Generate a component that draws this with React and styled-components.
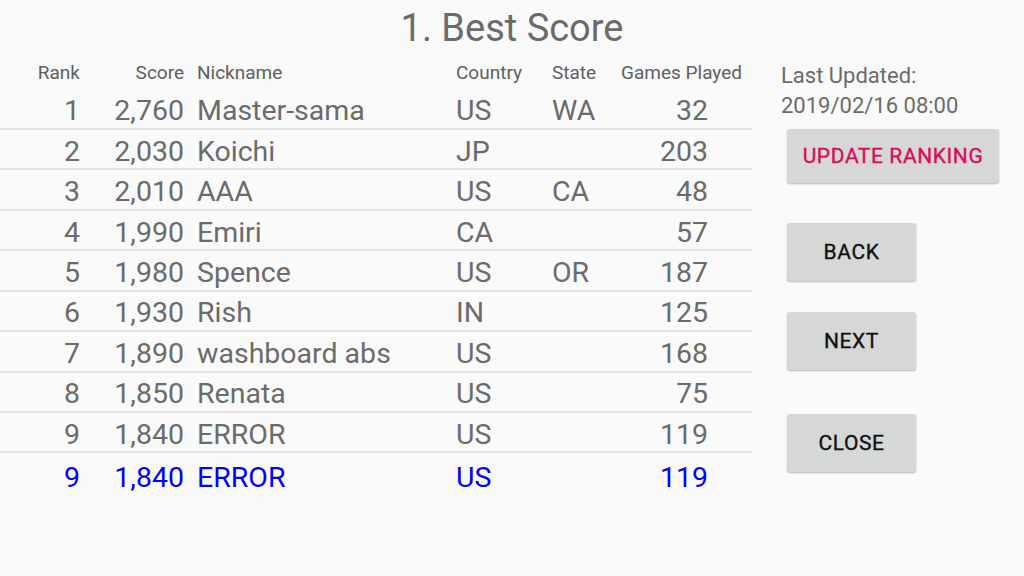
import React from 'react';
import styled, { createGlobalStyle } from 'styled-components';

const GlobalStyle = createGlobalStyle`
  html, body {
    margin: 0;
    padding: 0;
    background: #fafafa;
  }
  body {
    font-family: Roboto, "Liberation Sans", sans-serif;
  }
`;

const Screen = styled.div`
  width: 1024px;
  height: 576px;
  background: #fafafa;
  overflow: hidden;
`;

const Title = styled.h1`
  margin: 0;
  height: 56px;
  font-size: 38px;
  line-height: 56px;
  font-weight: 400;
  color: #6b6b6b;
  text-align: center;
`;

const Body = styled.div`
  display: flex;
`;

const Table = styled.div`
  width: 752px;
  display: flex;
  flex-direction: column;
`;

const Row = styled.div`
  display: grid;
  grid-template-columns: 80px 104px 272px 96px 69px 131px;
  align-items: center;
  box-sizing: border-box;
  height: ${(p) => (p.$header ? '33.5px' : '40.45px')};
  padding-top: ${(p) => (p.$header ? '0' : '4px')};
  margin-top: ${(p) => (p.$self ? '2px' : '0')};
  border-bottom: ${(p) => (p.$header || p.$self ? 'none' : '2px solid #e2e2e2')};
  font-size: ${(p) => (p.$header ? '19px' : '28.5px')};
  color: ${(p) => (p.$self ? '#0000ff' : p.$header ? '#5f5f5f' : '#6b6b6b')};
  white-space: nowrap;
`;

const Cell = styled.div`
  text-align: ${(p) => p.$align || 'left'};
  padding-left: ${(p) => p.$pl || 0}px;
  padding-right: ${(p) => p.$pr || 0}px;
`;

const Side = styled.div`
  margin-left: 29px;
  padding-top: 5px;
  display: flex;
  flex-direction: column;
  align-items: flex-start;
`;

const Updated = styled.div`
  font-size: 22px;
  line-height: 30px;
  color: #6b6b6b;
`;

const Button = styled.button`
  margin: ${(p) => p.$top}px 0 0 6px;
  width: ${(p) => (p.$wide ? 212 : 129)}px;
  height: ${(p) => (p.$wide ? 54 : 58)}px;
  padding: 0;
  border: none;
  border-radius: 3px;
  background: #d6d7d7;
  box-shadow: 0 1px 2px rgba(0, 0, 0, 0.28);
  font-family: Roboto, "Liberation Sans", sans-serif;
  font-size: 21px;
  font-weight: 400;
  letter-spacing: 0.6px;
  -webkit-text-stroke: 0.35px currentColor;
  color: ${(p) => (p.$accent ? '#dd0a55' : '#111')};
  text-transform: uppercase;
`;

const players = [
  [1, '2,760', 'Master-sama', 'US', 'WA', 32],
  [2, '2,030', 'Koichi', 'JP', '', 203],
  [3, '2,010', 'AAA', 'US', 'CA', 48],
  [4, '1,990', 'Emiri', 'CA', '', 57],
  [5, '1,980', 'Spence', 'US', 'OR', 187],
  [6, '1,930', 'Rish', 'IN', '', 125],
  [7, '1,890', 'washboard abs', 'US', '', 168],
  [8, '1,850', 'Renata', 'US', '', 75],
  [9, '1,840', 'ERROR', 'US', '', 119],
];

const RankRow = ({ data, self }) => (
  <Row $self={self}>
    <Cell $align="right">{data[0]}</Cell>
    <Cell $align="right">{data[1]}</Cell>
    <Cell $pl={13}>{data[2]}</Cell>
    <Cell>{data[3]}</Cell>
    <Cell>{data[4]}</Cell>
    <Cell $align="right" $pr={44}>{data[5]}</Cell>
  </Row>
);

const App = () => {
  return (
    <Screen>
      <GlobalStyle />
      <Title>1. Best Score</Title>
      <Body>
        <Table>
          <Row $header>
            <Cell $align="right">Rank</Cell>
            <Cell $align="right">Score</Cell>
            <Cell $pl={13}>Nickname</Cell>
            <Cell>Country</Cell>
            <Cell>State</Cell>
            <Cell>Games Played</Cell>
          </Row>
          {players.map((p) => (
            <RankRow key={p[0] + p[2]} data={p} />
          ))}
          <RankRow data={[9, '1,840', 'ERROR', 'US', '', 119]} self />
        </Table>
        <Side>
          <Updated>
            Last Updated:
            <br />
            2019/02/16 08:00
          </Updated>
          <Button $accent $wide $top={8}>Update Ranking</Button>
          <Button $top={40}>Back</Button>
          <Button $top={31}>Next</Button>
          <Button $top={44}>Close</Button>
        </Side>
      </Body>
    </Screen>
  );
};

export default App;
